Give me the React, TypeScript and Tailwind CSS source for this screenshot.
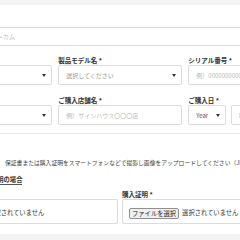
import React from 'react';

const font = { fontFamily: '"Noto Sans CJK JP", "Noto Sans", sans-serif' };

function Label({ text }: { text: string }) {
  return <div className="h-[8px] text-[6.5px] leading-[8px] font-bold text-[#333] whitespace-nowrap mb-[1px]">{text} *</div>;
}

function Arrow() {
  return <span className="w-0 h-0 border-l-[2px] border-r-[2px] border-t-[3px] border-l-transparent border-r-transparent border-t-[#333]" />;
}

function Select({ text, muted }: { text: string; muted?: boolean }) {
  return (
    <div className="h-[20px] border border-[#dcdcdc] rounded-[2px] bg-white flex items-center justify-between pl-[7px] pr-[5px]">
      <span className={`text-[6px] whitespace-nowrap ${muted ? 'text-[#999]' : 'text-[#555]'}`}>{text}</span>
      <Arrow />
    </div>
  );
}

function Input({ placeholder }: { placeholder: string }) {
  return (
    <div className="h-[20px] border border-[#dcdcdc] rounded-[2px] bg-white flex items-center pl-[7px] overflow-hidden">
      <span className="text-[6px] text-[#b8b8b8] whitespace-nowrap">{placeholder}</span>
    </div>
  );
}

function FileBox() {
  return (
    <div className="h-[25px] border border-[#dcdcdc] rounded-[2px] bg-white flex items-center gap-[3px] pl-[6px] pt-[3px] overflow-hidden">
      <span className="h-[11px] px-[2px] border border-[#8f8f8f] rounded-[2px] bg-[#efefef] text-[6.3px] leading-[9px] text-[#222] whitespace-nowrap">ファイルを選択</span>
      <span className="text-[6.3px] text-[#333] whitespace-nowrap">選択されていません</span>
    </div>
  );
}

export default function App() {
  return (
    <div className="w-[240px] h-[240px] overflow-hidden bg-white" style={font}>
      <div className="h-[5px] bg-[#f3f3f3]" />
      <div className="ml-[-72px] w-[384px]">
        {/* top input */}
        <div className="mt-[22px] h-[19px] border border-[#dcdcdc] rounded-[2px] flex items-center pl-[8px]">
          <span className="text-[6px] text-[#b8b8b8] whitespace-nowrap">例）サインハウスドットカム</span>
        </div>

        <div className="mt-[10px] grid grid-cols-3 gap-x-[6.5px] gap-y-[11px]">
          <div>
            <Label text="メーカー名" />
            <Select text="選択してください" muted />
          </div>
          <div>
            <Label text="製品モデル名" />
            <Select text="選択してください" muted />
          </div>
          <div>
            <Label text="シリアル番号" />
            <Input placeholder="例）0000000000000000" />
          </div>
          <div>
            <Label text="ご購入地域" />
            <Select text="選択してください" muted />
          </div>
          <div>
            <Label text="ご購入店舗名" />
            <Input placeholder="例）サインハウス〇〇〇店" />
          </div>
          <div>
            <Label text="ご購入日" />
            <div className="flex gap-[5px]">
              <div className="w-[38px]"><Select text="Year" /></div>
              <div className="w-[38px]"><Select text="Month" /></div>
              <div className="w-[38px]"><Select text="Day" /></div>
            </div>
          </div>
        </div>

        <div className="mt-[8px] border-t border-[#e6e6e6]" />

        <p className="mt-[25px] pl-[77px] h-[8px] text-[5.8px] leading-[8px] text-[#444] whitespace-nowrap">
          保証書または購入証明をスマートフォンなどで撮影し画像をアップロードしてください（JPEG・PNG形式）
        </p>

        <div className="mt-[9px] flex">
          <span className="text-[6.3px] leading-[8px] font-bold text-[#333] border-b border-[#555] whitespace-nowrap">保証書が無い時・購入証明の場合</span>
        </div>

        <div className="mt-[5px] grid grid-cols-2 gap-x-[4px]">
          <div>
            <Label text="保証書" />
            <FileBox />
          </div>
          <div>
            <Label text="購入証明" />
            <FileBox />
          </div>
        </div>
      </div>
      <div className="mt-[10px] h-[10px] bg-[#f3f3f3]" />
    </div>
  );
}
